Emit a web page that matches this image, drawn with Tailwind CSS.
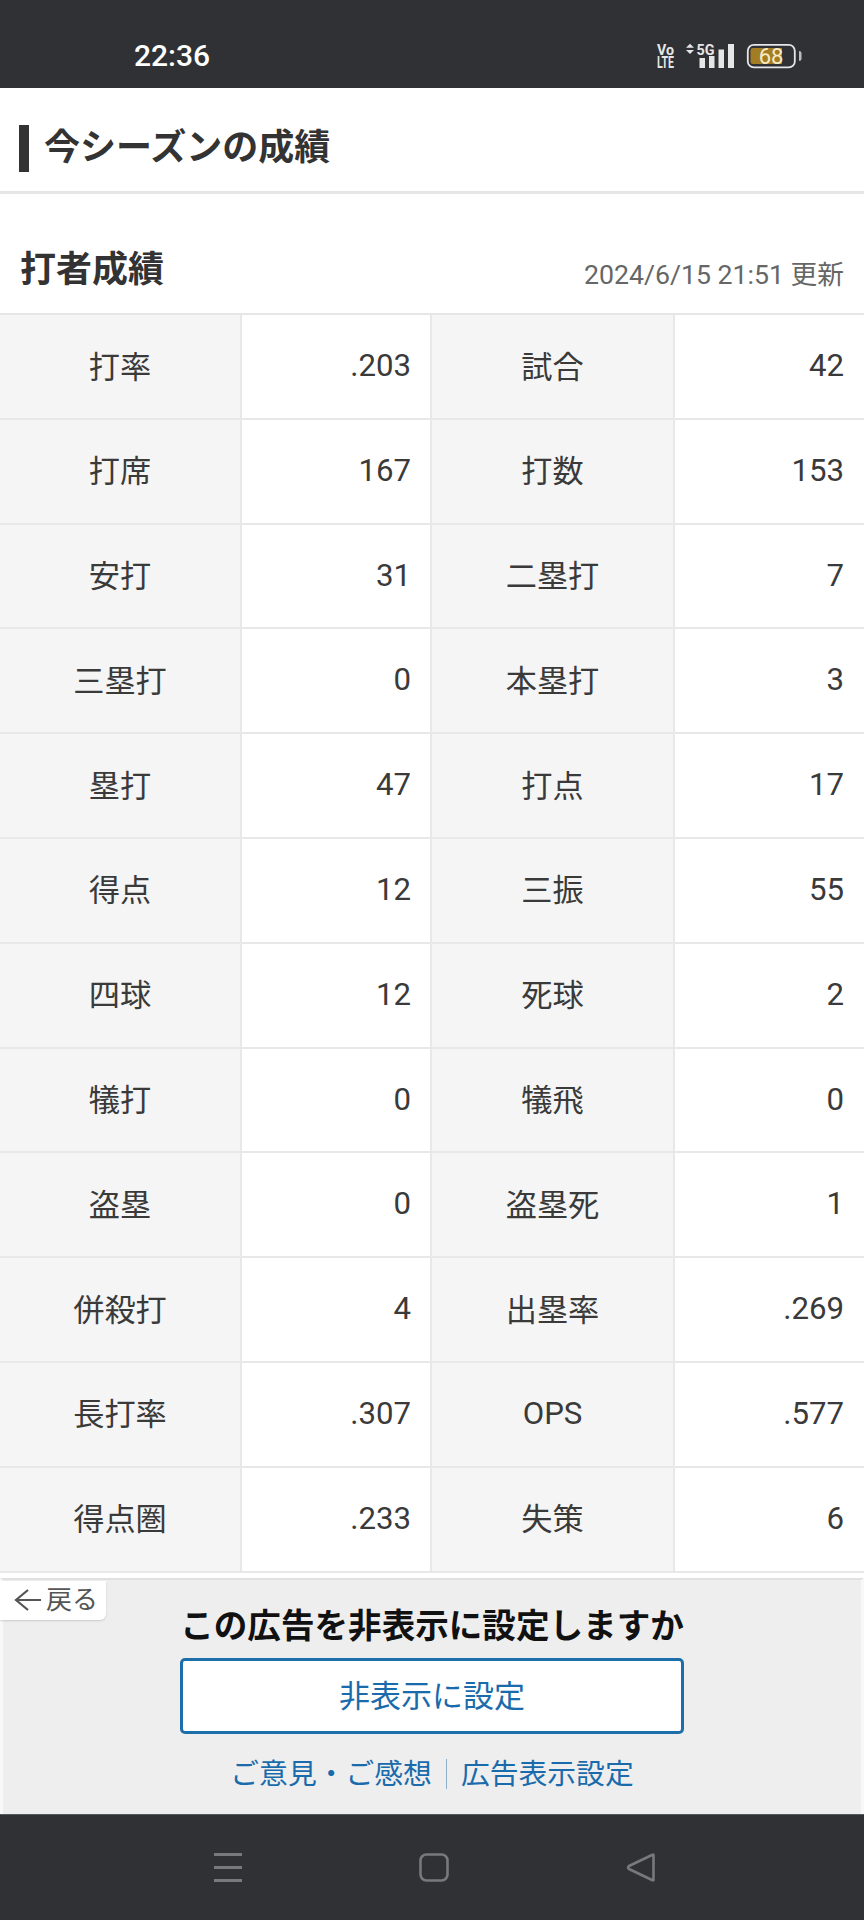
<!DOCTYPE html>
<html lang="ja">
<head>
<meta charset="utf-8">
<script src="https://cdn.jsdelivr.net/npm/@tailwindcss/browser@4"></script>
<title>今シーズンの成績</title>
</head>
<body class="bg-white">
<div class="w-[864px] h-[1920px] flex flex-col overflow-hidden font-['Roboto','Noto_Sans_CJK_JP',sans-serif] text-[#333]">
  <!-- status bar -->
  <div class="h-[88px] shrink-0 bg-[#2f3135] flex items-end pb-[19px] pl-[134px] pr-[61px] justify-between text-white">
    <span class="text-[30px] leading-[26px] font-medium">22:36</span>
    <svg width="146" height="26" viewBox="657 42 146 26" class="block overflow-visible">
      <text x="657" y="54" font-family="Roboto" font-weight="700" font-size="15.5" fill="#e6e6e6" textLength="17" lengthAdjust="spacingAndGlyphs">Vo</text>
      <text x="657" y="67" font-family="Roboto" font-weight="700" font-size="16" fill="#e6e6e6" textLength="17" lengthAdjust="spacingAndGlyphs">LTE</text>
      <path d="M686 46.8 L690 42.8 L694 46.8Z M686 49 L694 49 L690 53Z" fill="#e6e6e6"/>
      <text x="696.5" y="53.5" font-family="Roboto" font-weight="700" font-size="15" fill="#e6e6e6" textLength="18" lengthAdjust="spacingAndGlyphs">5G</text>
      <rect x="699.5" y="57" width="5.5" height="10" fill="#e6e6e6"/>
      <rect x="709" y="55" width="5.5" height="12" fill="#e6e6e6"/>
      <rect x="718.5" y="48.5" width="5.5" height="18.5" fill="#e6e6e6"/>
      <rect x="728" y="43" width="6" height="24" fill="#e6e6e6"/>
      <rect x="747.8" y="43.8" width="47" height="22.6" rx="6" fill="none" stroke="#e6e6e6" stroke-width="1.8"/>
      <path d="M753 47 H782 V63 H753 Q750.5 63 750.5 60.5 V49.5 Q750.5 47 753 47Z" fill="#a37d24"/>
      <text x="771" y="62.5" text-anchor="middle" font-family="Roboto" font-size="22" fill="#f7ebc6">68</text>
      <path d="M799 50 Q801.5 50 801.5 52 V58 Q801.5 60 799 60Z" fill="#bdbdbd"/>
    </svg>
  </div>
  <!-- section title -->
  <div class="h-[106px] shrink-0 border-b-[3px] border-[#e6e6e6] flex items-start pt-[37px] pl-[19px]">
    <div class="w-[10px] h-[47px] bg-[#333]"></div>
    <h1 class="ml-[15px] text-[36px] leading-[47px] font-bold">今シーズンの成績</h1>
  </div>
  <!-- subsection -->
  <div class="h-[119px] shrink-0 flex justify-between items-end pl-[20px] pr-[20px] pb-[18px]">
    <h2 class="text-[36px] leading-[50px] font-bold">打者成績</h2>
    <span class="text-[26.7px] leading-[36px] text-[#666] pb-[2px]">2024/6/15 21:51 更新</span>
  </div>
  <!-- stats table -->
  <div class="shrink-0 grid grid-cols-[242px_190px_243px_189px] auto-rows-[104.8px] border-t-2 border-[#e6e6e6] text-[31.2px] text-[#3a3a3a]">
    <div class="bg-[#f5f5f5] border-r-2 border-b-2 border-[#e8e8e8] flex items-center justify-center pt-[3px]">打率</div>
    <div class="border-r-2 border-b-2 border-[#e8e8e8] flex items-center justify-end pr-[19px]">.203</div>
    <div class="bg-[#f5f5f5] border-r-2 border-b-2 border-[#e8e8e8] flex items-center justify-center pt-[3px]">試合</div>
    <div class="border-b-2 border-[#e8e8e8] flex items-center justify-end pr-[20px]">42</div>
    <div class="bg-[#f5f5f5] border-r-2 border-b-2 border-[#e8e8e8] flex items-center justify-center pt-[3px]">打席</div>
    <div class="border-r-2 border-b-2 border-[#e8e8e8] flex items-center justify-end pr-[19px]">167</div>
    <div class="bg-[#f5f5f5] border-r-2 border-b-2 border-[#e8e8e8] flex items-center justify-center pt-[3px]">打数</div>
    <div class="border-b-2 border-[#e8e8e8] flex items-center justify-end pr-[20px]">153</div>
    <div class="bg-[#f5f5f5] border-r-2 border-b-2 border-[#e8e8e8] flex items-center justify-center pt-[3px]">安打</div>
    <div class="border-r-2 border-b-2 border-[#e8e8e8] flex items-center justify-end pr-[19px]">31</div>
    <div class="bg-[#f5f5f5] border-r-2 border-b-2 border-[#e8e8e8] flex items-center justify-center pt-[3px]">二塁打</div>
    <div class="border-b-2 border-[#e8e8e8] flex items-center justify-end pr-[20px]">7</div>
    <div class="bg-[#f5f5f5] border-r-2 border-b-2 border-[#e8e8e8] flex items-center justify-center pt-[3px]">三塁打</div>
    <div class="border-r-2 border-b-2 border-[#e8e8e8] flex items-center justify-end pr-[19px]">0</div>
    <div class="bg-[#f5f5f5] border-r-2 border-b-2 border-[#e8e8e8] flex items-center justify-center pt-[3px]">本塁打</div>
    <div class="border-b-2 border-[#e8e8e8] flex items-center justify-end pr-[20px]">3</div>
    <div class="bg-[#f5f5f5] border-r-2 border-b-2 border-[#e8e8e8] flex items-center justify-center pt-[3px]">塁打</div>
    <div class="border-r-2 border-b-2 border-[#e8e8e8] flex items-center justify-end pr-[19px]">47</div>
    <div class="bg-[#f5f5f5] border-r-2 border-b-2 border-[#e8e8e8] flex items-center justify-center pt-[3px]">打点</div>
    <div class="border-b-2 border-[#e8e8e8] flex items-center justify-end pr-[20px]">17</div>
    <div class="bg-[#f5f5f5] border-r-2 border-b-2 border-[#e8e8e8] flex items-center justify-center pt-[3px]">得点</div>
    <div class="border-r-2 border-b-2 border-[#e8e8e8] flex items-center justify-end pr-[19px]">12</div>
    <div class="bg-[#f5f5f5] border-r-2 border-b-2 border-[#e8e8e8] flex items-center justify-center pt-[3px]">三振</div>
    <div class="border-b-2 border-[#e8e8e8] flex items-center justify-end pr-[20px]">55</div>
    <div class="bg-[#f5f5f5] border-r-2 border-b-2 border-[#e8e8e8] flex items-center justify-center pt-[3px]">四球</div>
    <div class="border-r-2 border-b-2 border-[#e8e8e8] flex items-center justify-end pr-[19px]">12</div>
    <div class="bg-[#f5f5f5] border-r-2 border-b-2 border-[#e8e8e8] flex items-center justify-center pt-[3px]">死球</div>
    <div class="border-b-2 border-[#e8e8e8] flex items-center justify-end pr-[20px]">2</div>
    <div class="bg-[#f5f5f5] border-r-2 border-b-2 border-[#e8e8e8] flex items-center justify-center pt-[3px]">犠打</div>
    <div class="border-r-2 border-b-2 border-[#e8e8e8] flex items-center justify-end pr-[19px]">0</div>
    <div class="bg-[#f5f5f5] border-r-2 border-b-2 border-[#e8e8e8] flex items-center justify-center pt-[3px]">犠飛</div>
    <div class="border-b-2 border-[#e8e8e8] flex items-center justify-end pr-[20px]">0</div>
    <div class="bg-[#f5f5f5] border-r-2 border-b-2 border-[#e8e8e8] flex items-center justify-center pt-[3px]">盗塁</div>
    <div class="border-r-2 border-b-2 border-[#e8e8e8] flex items-center justify-end pr-[19px]">0</div>
    <div class="bg-[#f5f5f5] border-r-2 border-b-2 border-[#e8e8e8] flex items-center justify-center pt-[3px]">盗塁死</div>
    <div class="border-b-2 border-[#e8e8e8] flex items-center justify-end pr-[20px]">1</div>
    <div class="bg-[#f5f5f5] border-r-2 border-b-2 border-[#e8e8e8] flex items-center justify-center pt-[3px]">併殺打</div>
    <div class="border-r-2 border-b-2 border-[#e8e8e8] flex items-center justify-end pr-[19px]">4</div>
    <div class="bg-[#f5f5f5] border-r-2 border-b-2 border-[#e8e8e8] flex items-center justify-center pt-[3px]">出塁率</div>
    <div class="border-b-2 border-[#e8e8e8] flex items-center justify-end pr-[20px]">.269</div>
    <div class="bg-[#f5f5f5] border-r-2 border-b-2 border-[#e8e8e8] flex items-center justify-center pt-[3px]">長打率</div>
    <div class="border-r-2 border-b-2 border-[#e8e8e8] flex items-center justify-end pr-[19px]">.307</div>
    <div class="bg-[#f5f5f5] border-r-2 border-b-2 border-[#e8e8e8] flex items-center justify-center">OPS</div>
    <div class="border-b-2 border-[#e8e8e8] flex items-center justify-end pr-[20px]">.577</div>
    <div class="bg-[#f5f5f5] border-r-2 border-b-2 border-[#e8e8e8] flex items-center justify-center pt-[3px]">得点圏</div>
    <div class="border-r-2 border-b-2 border-[#e8e8e8] flex items-center justify-end pr-[19px]">.233</div>
    <div class="bg-[#f5f5f5] border-r-2 border-b-2 border-[#e8e8e8] flex items-center justify-center pt-[3px]">失策</div>
    <div class="border-b-2 border-[#e8e8e8] flex items-center justify-end pr-[20px]">6</div>
  </div>
  <!-- ad panel -->
  <div class="relative mt-[5px] flex-1 bg-[#eeeeee] border-t-2 border-x-[3px] border-[#e0e0e0] border-x-[#f8f8f8] flex flex-col items-center">
    <div class="absolute left-[-3px] top-[1px] w-[106px] h-[39px] bg-white rounded-br-[6px] shadow-[0_1px_2px_rgba(0,0,0,0.15)] flex items-center pl-[13px] text-[26px] leading-none text-[#555]">
      <svg width="30" height="26" viewBox="0 0 30 26" class="shrink-0 mr-[3px]"><path d="M15 3 L3 13 L15 23 M3 13 H28" fill="none" stroke="#555" stroke-width="2.2"/></svg>
      <span>戻る</span>
    </div>
    <p class="mt-[25px] text-[33.6px] leading-[44px] font-bold text-[#111]">この広告を非表示に設定しますか</p>
    <button class="mt-[9px] w-[504px] h-[76px] bg-white border-[3px] border-[#1c6fa8] rounded-[5px] pt-[3px] text-[31px] text-[#1a6bab]">非表示に設定</button>
    <div class="mt-[22px] flex items-center text-[28.8px] leading-[36px] text-[#1a6bab]">
      <span>ご意見・ご感想</span>
      <span class="mx-[14px] w-[1px] h-[30px] bg-[#8fb0c9]"></span>
      <span>広告表示設定</span>
    </div>
  </div>
  <!-- nav bar -->
  <div class="h-[106px] shrink-0 bg-[#2f3135] border-t border-[#55585c] flex items-start justify-start pt-[38px] pl-[214px] gap-[177px]">
    <svg width="28" height="29" viewBox="0 0 28 29"><path d="M0 1.5 H28 M0 14.5 H28 M0 27.5 H28" stroke="#77797d" stroke-width="3"/></svg>
    <svg width="30" height="29" viewBox="0 0 30 29"><rect x="1.5" y="1.5" width="27" height="26" rx="6" fill="none" stroke="#77797d" stroke-width="2.6"/></svg>
    <svg width="30" height="29" viewBox="0 0 30 29"><path d="M27.5 2 V27 Q27.5 28 26 27 L3 16 Q1 14.5 3 13 L26 2 Q27.5 1 27.5 2Z" fill="none" stroke="#77797d" stroke-width="2.6" stroke-linejoin="round"/></svg>
  </div>
</div>
</body>
</html>
